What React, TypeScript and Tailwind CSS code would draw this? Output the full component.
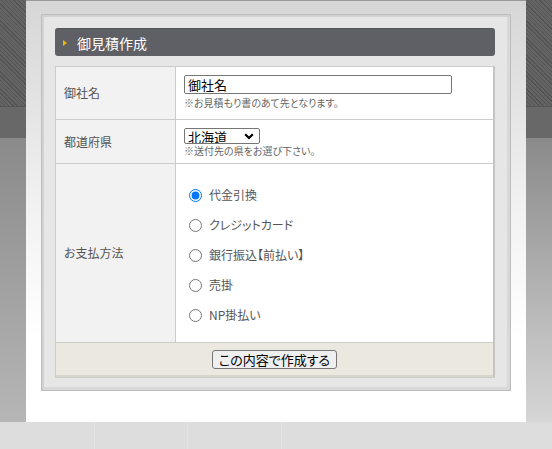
import React from "react";

const Strip = ({ right }: { right?: boolean }) => (
  <div className="w-[26px] h-[422px] flex flex-col bg-[#9c9c9c]">
    <div className="h-[106px] shrink-0 bg-[#5d5d5d] bg-[repeating-linear-gradient(45deg,#545454_0px,#545454_1px,#646464_1px,#646464_3px)]" />
    <div className="h-[32px] shrink-0 bg-[#686868] border-t border-[#555555]" />
    {right ? (
      <div className="h-[284px] shrink-0 bg-[#a8a8a8] bg-[linear-gradient(180deg,#8a8a8a_0%,#d6d6d6_100%)]" />
    ) : (
      <div className="h-[284px] shrink-0 bg-[#a0a0a0] bg-[linear-gradient(180deg,#8a8a8a_0%,#b6b6b6_100%)]" />
    )}
  </div>
);

const options = ["代金引換", "クレジットカード", "銀行振込【前払い】", "売掛", "NP掛払い"];

export default function App() {
  return (
    <div className="w-[552px] h-[449px] flex flex-col overflow-hidden font-['Noto_Sans_CJK_JP',sans-serif] [font-feature-settings:'palt']">
      <div className="h-[422px] flex">
        <Strip />
        <div className="w-[500px] h-full bg-linear-to-b from-[#d6d6d6] via-[#f2f2f2] via-50% to-[#ffffff] to-80% border-t border-[#9a9a9a] pt-[13px] pl-[15px]">
          <div className="w-[470px] h-[377px] bg-[#e6e6e6] border border-[#bdbdbd] shadow-[inset_2px_2px_0_#d2d2d2,inset_-3px_-3px_0_#d8d8d8] pt-[13px] pl-[13px]">
            <div className="w-[440px] h-[28px] rounded-[3px] bg-[#5f6065] border-t border-[#55565a] flex items-center pl-[8px]">
              <svg width="4" height="6" viewBox="0 0 4 6" className="shrink-0">
                <polygon points="0,0 4,3 0,6" fill="#f2b400" />
              </svg>
              <span className="ml-[10px] text-[14px] leading-none text-white">御見積作成</span>
            </div>
            <div className="mt-[10px] w-[440px] border border-[#cccccc] border-r-2 border-r-[#c4c4c4] grid grid-cols-[120px_1fr] text-[#555555]">
              <div className="h-[53px] bg-[#f2f2f2] border-r border-b border-[#cccccc] flex items-center pl-[8px] text-[12px]">御社名</div>
              <div className="h-[53px] bg-white border-b border-[#cccccc] pl-[8px] pt-[8px]">
                <input
                  defaultValue="御社名"
                  className="block w-[268px] h-[19px] border border-[#767676] rounded-[2px] px-[3px] text-[13px] leading-none text-black bg-white outline-none"
                />
                <div className="mt-[3px] text-[10px] leading-[12px] text-[#666666]">※お見積もり書のあて先となります。</div>
              </div>
              <div className="h-[44px] bg-[#f2f2f2] border-r border-b border-[#cccccc] flex items-center pl-[8px] text-[12px]">都道府県</div>
              <div className="h-[44px] bg-white border-b border-[#cccccc] pl-[8px] pt-[8px]">
                <div className="relative w-[76px] h-[16px]">
                  <select className="appearance-none block w-[76px] h-[16px] border border-[#767676] rounded-[2px] pl-[3px] text-[13px] leading-none text-black bg-white outline-none">
                    <option>北海道</option>
                  </select>
                  <svg className="absolute right-[6px] top-[5px] pointer-events-none" width="10" height="7" viewBox="0 0 10 7">
                    <polyline points="1.2,1.2 5,5 8.8,1.2" fill="none" stroke="#000" strokeWidth="2.2" />
                  </svg>
                </div>
                <div className="mt-[1px] text-[10px] leading-[12px] text-[#666666]">※送付先の県をお選び下さい。</div>
              </div>
              <div className="h-[179px] bg-[#f2f2f2] border-r border-b border-[#cccccc] flex items-center pl-[8px] text-[12px]">お支払方法</div>
              <div className="h-[179px] bg-white border-b border-[#cccccc] pl-[13px] pt-[16px] flex flex-col">
                {options.map((o, i) => (
                  <label key={o} className="h-[30px] flex items-center gap-[7px] text-[12px]">
                    <input type="radio" name="pay" defaultChecked={i === 0} className="m-0 w-[13px] h-[13px] accent-[#0075ff]" />
                    <span>{o}</span>
                  </label>
                ))}
              </div>
              <div className="col-span-2 h-[34px] bg-[#ebe8e0] border-b-2 border-[#d8d5cc] flex items-center justify-center">
                <button className="h-[19px] px-[6px] border border-[#767676] rounded-[3px] bg-[#efefef] text-[13px] leading-none text-black">この内容で作成する</button>
              </div>
            </div>
          </div>
        </div>
        <Strip right />
      </div>
      <div className="h-[27px] bg-[#dddddd] flex">
        <div className="w-[95px] border-r border-[#e4e4e4]" />
        <div className="w-[93px] border-r border-[#e4e4e4]" />
        <div className="w-[94px] border-r border-[#e4e4e4]" />
      </div>
    </div>
  );
}
